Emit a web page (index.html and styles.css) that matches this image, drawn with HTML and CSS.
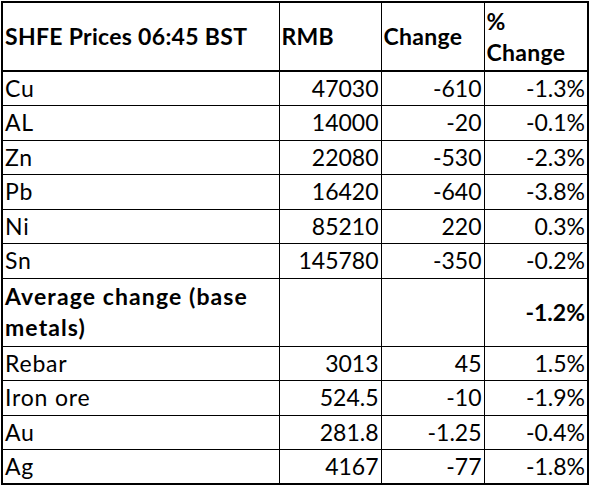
FILE: index.html
```html
<!DOCTYPE html>
<html>
<head>
<meta charset="utf-8">
<link rel="stylesheet" href="styles.css">
</head>
<body>
<table class="prices">
  <colgroup>
    <col class="c-name"><col class="c-rmb"><col class="c-chg"><col class="c-pct">
  </colgroup>
  <thead>
    <tr class="head">
      <th class="name">SHFE Prices 06:45 BST</th>
      <th>RMB</th>
      <th>Change</th>
      <th>% Change</th>
    </tr>
  </thead>
  <tbody>
    <tr><td class="name">Cu</td><td>47030</td><td>-610</td><td>-1.3%</td></tr>
    <tr><td class="name">AL</td><td>14000</td><td>-20</td><td>-0.1%</td></tr>
    <tr><td class="name">Zn</td><td>22080</td><td>-530</td><td>-2.3%</td></tr>
    <tr><td class="name">Pb</td><td>16420</td><td>-640</td><td>-3.8%</td></tr>
    <tr><td class="name">Ni</td><td>85210</td><td>220</td><td>0.3%</td></tr>
    <tr><td class="name">Sn</td><td>145780</td><td>-350</td><td>-0.2%</td></tr>
    <tr class="avg"><td class="name">Average change (base metals)</td><td></td><td></td><td>-1.2%</td></tr>
    <tr><td class="name">Rebar</td><td>3013</td><td>45</td><td>1.5%</td></tr>
    <tr><td class="name">Iron ore</td><td>524.5</td><td>-10</td><td>-1.9%</td></tr>
    <tr><td class="name">Au</td><td>281.8</td><td>-1.25</td><td>-0.4%</td></tr>
    <tr><td class="name">Ag</td><td>4167</td><td>-77</td><td>-1.8%</td></tr>
  </tbody>
</table>
</body>
</html>
```
FILE: styles.css
```css
html, body {
  margin: 0;
  padding: 0;
  background: #fff;
}
body {
  padding: 1px 0 0 1px;
  font-family: "Lato", "Open Sans", sans-serif;
  font-size: 23px;
  color: #000;
}
.prices {
  border-collapse: collapse;
  table-layout: fixed;
  width: 586px;
  border: 2px solid #000;
}
.c-name { width: 277px; }
.c-rmb { width: 102px; }
.c-chg { width: 103px; }
.c-pct { width: 104px; }
.prices th,
.prices td {
  border: 1px solid #000;
  padding: 0 2px;
  vertical-align: middle;
  line-height: 31px;
  text-align: right;
  white-space: nowrap;
}
.prices th {
  font-weight: 700;
  text-align: left;
  white-space: normal;
  border-bottom: 2px solid #000;
  letter-spacing: 0.3px;
}
.prices tr { height: 34.5px; }
.prices tr.head { height: 69px; }
.prices tr.avg { height: 68px; }
.prices td.name {
  text-align: left;
  letter-spacing: 0.8px;
}
.prices tr.avg td {
  font-weight: 700;
  white-space: normal;
}
.prices tr.avg td.name { letter-spacing: 1.1px; }
```
